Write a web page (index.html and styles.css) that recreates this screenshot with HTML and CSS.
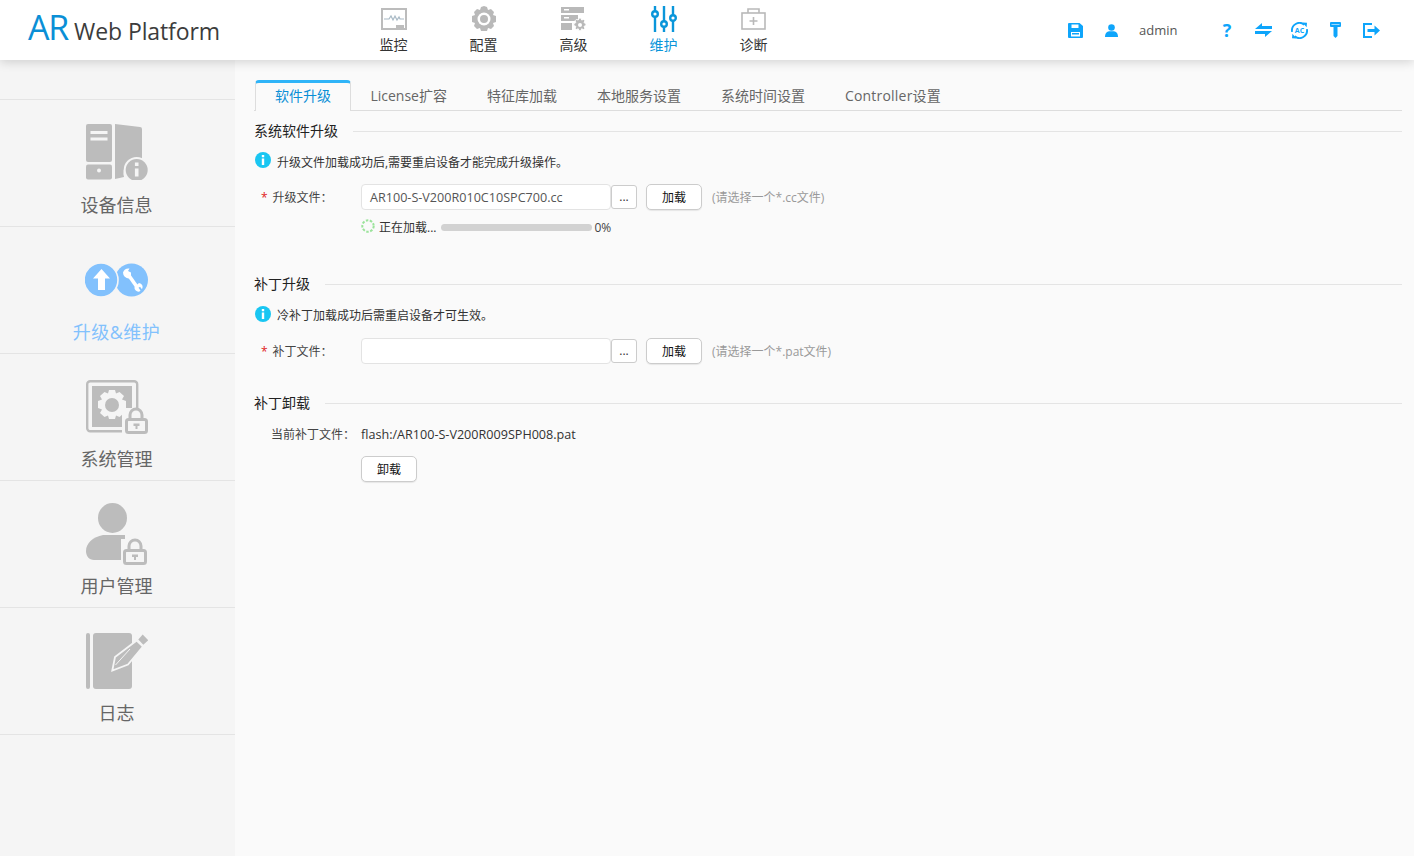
FILE: index.html
```html
<!DOCTYPE html>
<html lang="zh-CN">
<head>
<meta charset="utf-8">
<title>AR Web Platform</title>
<link rel="stylesheet" href="styles.css">
</head>
<body>
<header class="header">
  <div class="logo"><span class="logo-ar">AR</span><span class="logo-text">Web Platform</span></div>
  <nav class="topnav">
    <a class="topnav-item">
      <svg class="topnav-icon" viewBox="0 0 26 22"><rect x="1" y="1" width="24" height="20" fill="none" stroke="#bcbcbc" stroke-width="2"/><path d="M3 11h5l2-3 2 4 2-4 2 4 2-3 1 2h4" fill="none" stroke="#a9bac6" stroke-width="1.2"/><path d="M15 20v-3h8v3z" fill="#bcbcbc"/></svg>
      <span>监控</span>
    </a>
    <a class="topnav-item">
      <svg class="topnav-icon" viewBox="0 0 26 26"><path d="M13 0l3 1 1 3 3-1 3 3-1 3 3 1v6l-3 1 1 3-3 3-3-1-1 3h-6l-1-3-3 1-3-3 1-3-3-1v-6l3-1-1-3 3-3 3 1 1-3z" fill="#b9b9b9"/><circle cx="13" cy="13" r="6.500" fill="#fff"/><circle cx="13" cy="13" r="4" fill="#b9b9b9"/></svg>
      <span>配置</span>
    </a>
    <a class="topnav-item">
      <svg class="topnav-icon" viewBox="0 0 26 24"><path d="M0 0h23v6H0zM0 8h17v6H0zM0 16h11v7H0z" fill="#b9b9b9"/><path d="M3 2h5v1.500H3zM3 10h5v1.500H3z" fill="#fff"/><path d="M18 11l2 0 .6 2 2-.6 1.400 1.400-1 1.800 2 1v2l-2 .8 1 1.800-1.400 1.400-2-.8-.6 2h-2l-.8-2-1.800.8-1.400-1.400.8-1.800-2-.8v-2l2-1-.8-1.800 1.400-1.400 1.800.6z" fill="#b9b9b9" stroke="#fff"/><circle cx="19" cy="18" r="2" fill="#fff"/></svg>
      <span>高级</span>
    </a>
    <a class="topnav-item is-active">
      <svg class="topnav-icon" viewBox="0 0 26 26"><g stroke="#0a96da" stroke-width="2.400" fill="#fff"><path d="M4 0v26M13 0v26M22 0v26" fill="none"/><circle cx="4" cy="8" r="2.800"/><circle cx="13" cy="18" r="2.800"/><circle cx="22" cy="12" r="2.800"/></g></svg>
      <span>维护</span>
    </a>
    <a class="topnav-item">
      <svg class="topnav-icon" viewBox="0 0 26 22"><g fill="none" stroke="#b9b9b9" stroke-width="1.600"><rect x="1" y="5" width="23" height="16"/><path d="M7 5V1h11v4M12.500 9v8M8.500 13h8"/></g></svg>
      <span>诊断</span>
    </a>
  </nav>
  <div class="tools">
    <svg class="tool tool-save" viewBox="0 0 15 15"><path fill-rule="evenodd" d="M0 1a1 1 0 011-1h10.500L15 3v11a1 1 0 01-1 1H1a1 1 0 01-1-1zM3.500 1.500V5h7V1.500zM3 9v4.500h9V9z" fill="#0ea5fb"/><rect x="4" y="10" width="7" height="1.500" fill="#0ea5fb"/></svg>
    <svg class="tool tool-user" viewBox="0 0 13 13"><circle cx="6.500" cy="3.500" r="3.300" fill="#0ea5fb"/><path d="M0 13c0-4 2-5.500 4-5.800h5c2 .3 4 1.800 4 5.800z" fill="#0ea5fb"/></svg>
    <span class="username">admin</span>
    <span class="tool-help">?</span>
    <svg class="tool tool-swap" viewBox="0 0 17 14"><path d="M7 0v3h10v3H0zM10 14v-3H0V8h17z" fill="#0ea5fb"/></svg>
    <svg class="tool tool-ac" viewBox="0 0 17 17"><path d="M13.300 2.700A7.500 7.500 0 001.100 9.800M3.700 14.300A7.500 7.500 0 0015.900 7.200" fill="none" stroke="#0ea5fb" stroke-width="1.900"/><path d="M11.500 .5l4.500 .2-.4 4.600zM5.500 16.500l-4.500-.2.4-4.600z" fill="#0ea5fb"/><text x="8.500" y="11" text-anchor="middle" class="tool-ac-text">AC</text></svg>
    <svg class="tool tool-key" viewBox="0 0 11 16"><path d="M1 0h9a1 1 0 011 1v3a1 1 0 01-1 1H7.500v9l-2 2-2-2V5H1a1 1 0 01-1-1V1a1 1 0 011-1z" fill="#0ea5fb"/><rect x="1.500" y="2" width="8" height="1" fill="#9bd8fd"/></svg>
    <svg class="tool tool-exit" viewBox="0 0 17 15"><path d="M9 1H1v13h8" fill="none" stroke="#0ea5fb" stroke-width="2"/><path d="M4.500 6h7V2.500L17 7.500l-5.500 5V9h-7z" fill="#0ea5fb"/></svg>
  </div>
</header>

<div class="layout">
  <aside class="sidebar">
    <a class="side-item">
      <svg class="side-icon" viewBox="0 0 62 56"><rect x="0" y="0" width="26" height="38" rx="2" fill="#bcbcbc"/><rect x="0" y="40.500" width="26" height="15" rx="2" fill="#bcbcbc"/><path d="M4.500 7h17v3h-17zM4.500 13.500h17v3h-17z" fill="#f5f5f5"/><circle cx="13" cy="46.500" r="2" fill="#f5f5f5"/><path d="M29 0l25 3a2 2 0 012 2v30H52a14 14 0 00-14 18l-9 2z" fill="#bcbcbc"/><circle cx="50.700" cy="46" r="13" fill="#f5f5f5"/><circle cx="50.700" cy="46" r="11" fill="#bcbcbc"/><path d="M48.900 44.500h3.600v8h-3.600zM48.900 38.500h3.600v3.500h-3.600z" fill="#f5f5f5"/></svg>
      <span>设备信息</span>
    </a>
    <a class="side-item is-active">
      <svg class="side-icon" viewBox="0 0 64 34"><circle cx="46.500" cy="17" r="16.500" fill="#82c1fd"/><circle cx="16" cy="17" r="17" fill="#82c1fd" stroke="#f5f5f5" stroke-width="1.600"/><path d="M16.500 6l8.500 9.500h-5V27h-7V15.500H8z" fill="#fff"/><path d="M42.500 10.500L52 24" stroke="#fff" stroke-width="3.600" fill="none"/><path d="M44.500 5.500a6 6 0 00-6.500 4 6 6 0 006 6l2-2 0-4-3-1.500z" fill="#fff"/><path d="M49.500 24a4 4 0 005 4.500l1-1-2-2.800 1.500-1 2 2.500a4 4 0 00-3-6.200z" fill="#fff"/></svg>
      <span>升级&amp;维护</span>
    </a>
    <a class="side-item">
      <svg class="side-icon" viewBox="0 0 62 54"><rect x="1.200" y="1.200" width="50" height="50" rx="3" fill="none" stroke="#bcbcbc" stroke-width="2.400"/><rect x="6" y="6" width="40" height="41" fill="#bcbcbc"/><path d="M23 10h6l1 3.500 3.500-1.500 4.500 4-2 3.500 4 1.500v7l-4 1.500 2 3.500-4.500 4-3.500-1.500-1 3.500h-6l-1-3.500-3.500 1.500-4.500-4 2-3.500-4-1.500v-7l4-1.500-2-3.500 4.500-4 3.500 1.500z" fill="#f5f5f5"/><circle cx="26" cy="25" r="7" fill="#bcbcbc"/><rect x="36" y="28" width="26" height="26" fill="#f5f5f5"/><path d="M44 39v-4a6 6 0 0112 0v4" fill="none" stroke="#bcbcbc" stroke-width="3"/><rect x="40.500" y="39.500" width="20" height="13" rx="2" fill="#f5f5f5" stroke="#bcbcbc" stroke-width="3"/><path d="M47.500 43.500h6V46h-2v3h-2v-3h-2z" fill="#bcbcbc"/></svg>
      <span>系统管理</span>
    </a>
    <a class="side-item">
      <svg class="side-icon" viewBox="0 0 62 62"><ellipse cx="26.500" cy="15" rx="14.500" ry="15" fill="#bcbcbc"/><path d="M0 48c0-8 7-14 17-16h22v25H8c-5 0-8-4-8-9z" fill="#bcbcbc"/><rect x="35" y="36" width="27" height="26" fill="#f5f5f5"/><path d="M43 47v-4a6 6 0 0112 0v4" fill="none" stroke="#bcbcbc" stroke-width="3"/><rect x="38.500" y="47.500" width="21" height="13" rx="2" fill="#f5f5f5" stroke="#bcbcbc" stroke-width="3"/><path d="M46 51.500h6V54h-2v3h-2v-3h-2z" fill="#bcbcbc"/></svg>
      <span>用户管理</span>
    </a>
    <a class="side-item">
      <svg class="side-icon" viewBox="0 0 62 57"><rect x="0" y="1" width="4" height="56" rx="2" fill="#bcbcbc"/><rect x="7" y="1" width="39" height="56" rx="3" fill="#bcbcbc"/><path d="M26.300 38.500L29 25 50.700 8.500 57 14.500 42 32.500z" fill="#bcbcbc" stroke="#f5f5f5" stroke-width="1.800"/><path d="M29.500 33L44 17" stroke="#f5f5f5" stroke-width="1" fill="none"/><path d="M56.700 2.500l5.600 5.700-5 4.600-5-5.300z" fill="#bcbcbc"/></svg>
      <span>日志</span>
    </a>
  </aside>

  <main class="content">
    <div class="tabs">
      <a class="tab is-active">软件升级</a>
      <a class="tab">License扩容</a>
      <a class="tab">特征库加载</a>
      <a class="tab">本地服务设置</a>
      <a class="tab">系统时间设置</a>
      <a class="tab">Controller设置</a>
    </div>

    <section class="section section-first">
      <h2 class="section-title"><span>系统软件升级</span></h2>
      <p class="notice">
        <svg class="info-icon" viewBox="0 0 16 16"><circle cx="8" cy="8" r="8" fill="#19c6f2"/><path d="M6.800 6.500h2.400V13H6.800zM6.800 3h2.400v2.300H6.800z" fill="#fff"/></svg>
        <span>升级文件加载成功后,需要重启设备才能完成升级操作。</span>
      </p>
      <div class="form-row">
        <label class="form-label"><i class="req">*</i>升级文件：</label>
        <div class="file-input">AR100-S-V200R010C10SPC700.cc</div>
        <button class="browse">...</button>
        <button class="btn btn-load">加载</button>
        <span class="hint">(请选择一个*.cc文件)</span>
      </div>
      <div class="progress-row">
        <svg class="spinner" viewBox="0 0 14 14"><circle cx="7" cy="7" r="5.700" fill="none" stroke="#9be39b" stroke-width="2" stroke-dasharray="2.500 1.500"/></svg>
        <span class="progress-label">正在加载...</span>
        <span class="progress-track"></span>
        <span class="progress-value">0%</span>
      </div>
    </section>

    <section class="section section-patch">
      <h2 class="section-title"><span>补丁升级</span></h2>
      <p class="notice">
        <svg class="info-icon" viewBox="0 0 16 16"><circle cx="8" cy="8" r="8" fill="#19c6f2"/><path d="M6.800 6.500h2.400V13H6.800zM6.800 3h2.400v2.300H6.800z" fill="#fff"/></svg>
        <span>冷补丁加载成功后需重启设备才可生效。</span>
      </p>
      <div class="form-row">
        <label class="form-label"><i class="req">*</i>补丁文件：</label>
        <div class="file-input"></div>
        <button class="browse">...</button>
        <button class="btn btn-load">加载</button>
        <span class="hint">(请选择一个*.pat文件)</span>
      </div>
    </section>

    <section class="section section-unload">
      <h2 class="section-title"><span>补丁卸载</span></h2>
      <div class="info-row">
        <span class="info-label">当前补丁文件：</span>
        <span class="info-value">flash:/AR100-S-V200R009SPH008.pat</span>
      </div>
      <div class="action-row"><button class="btn">卸载</button></div>
    </section>
  </main>
</div>
</body>
</html>
```
FILE: styles.css
```css
* { box-sizing: border-box; }
html, body { height: 100%; }
body {
  margin: 0;
  display: flex;
  flex-direction: column;
  overflow: hidden;
  background: #fafafa;
  color: #333;
  font-family: "Open Sans", "Noto Sans CJK SC", sans-serif;
  font-size: 12px;
}

.header {
  position: relative;
  z-index: 2;
  flex: 0 0 60px;
  display: flex;
  align-items: flex-start;
  background: #fff;
  box-shadow: 0 2px 10px rgba(0, 0, 0, .16);
}
.logo { width: 349px; padding: 9px 0 0 28px; display: flex; align-items: baseline; white-space: nowrap; }
.logo-ar { font: 34px/36px "Open Sans", sans-serif; color: #0a8fd6; letter-spacing: -1.200px; }
.logo-text { margin-left: 6px; font: 23px/36px "Open Sans", sans-serif; color: #3c3c3c; letter-spacing: -.1px; }

.topnav { display: flex; }
.topnav-item { width: 90px; height: 60px; padding-top: 6px; display: flex; flex-direction: column; align-items: center; font-size: 14px; color: #333; }
.topnav-item span { line-height: 18px; position: absolute; top: 36px; margin-left: -1px; }
.topnav-item.is-active { color: #0a96da; }
.topnav-icon { width: 26px; height: 26px; }

.tools { margin-left: auto; height: 60px; padding-right: 34px; display: flex; align-items: center; }
.tool { flex: none; display: block; }
.tool-save { width: 15px; height: 15px; }
.tool-user { width: 13px; height: 13px; margin-left: 22px; }
.username { width: 40px; margin-left: 21px; font-size: 13px; color: #555; }
.tool-help { width: 12px; margin-left: 42px; font: bold 18px/18px "Open Sans", sans-serif; color: #0ea5fb; text-align: center; }
.tool-swap { width: 17px; height: 14px; margin-left: 22px; }
.tool-ac { width: 17px; height: 17px; margin-left: 19px; }
.tool-ac-text { font: bold 7px "Open Sans", sans-serif; fill: #0ea5fb; }
.tool-key { width: 11px; height: 16px; margin-left: 22px; }
.tool-exit { width: 17px; height: 15px; margin-left: 22px; }

.layout { flex: 1; min-height: 0; display: flex; }
.sidebar { flex: 0 0 235px; padding-top: 39px; background: #f5f5f5; }
.side-item { height: 127px; position: relative; display: flex; flex-direction: column; align-items: center; border-top: 1px solid #e4e4e4; font-size: 18px; color: #666; }
.side-item:last-child { border-bottom: 1px solid #e4e4e4; height: 128px; }
.side-item span { position: absolute; top: 92px; left: 0; right: 2px; text-align: center; line-height: 26px; }
.side-item.is-active { color: #82c1fd; letter-spacing: .5px; }
.side-icon { position: absolute; top: 24px; left: 86px; width: 62px; height: 56px; }
.side-item:nth-child(2) .side-icon { left: 85px; top: 36px; width: 64px; height: 34px; }
.side-item:nth-child(3) .side-icon { top: 26px; height: 54px; }
.side-item:nth-child(4) .side-icon { top: 22px; height: 62px; }
.side-item:nth-child(5) .side-icon { height: 57px; }

.content { flex: 1; min-width: 0; padding: 20px 12px 0 19px; }
.tabs { height: 31px; display: flex; align-items: flex-end; border-bottom: 1px solid #ddd; font-size: 14px; color: #666; }
.tab { height: 31px; padding: 0 20px; line-height: 34px; white-space: nowrap; }
.tab:last-child { letter-spacing: .2px; }
.tab.is-active { width: 96px; margin: 0 -.6px -1px 1px; padding: 0; text-align: center; height: 31px; border: 1px solid #ddd; border-top: 3px solid #2fb4f8; border-bottom: 0; border-radius: 4px 4px 0 0; background: #fafafa; color: #0a8fd6; line-height: 26px; }

.section-title { margin: 0; display: flex; align-items: center; gap: 15px; font-size: 14px; font-weight: 400; line-height: 20px; color: #222; }
.section-title::after { content: ""; flex: 1; height: 1px; background: #e4e4e4; }
.section-first { padding-top: 10px; }
.section-patch { padding-top: 37px; }
.section-unload { padding-top: 29px; }

.notice { margin: 11px 0 0 1px; height: 20px; display: flex; align-items: center; gap: 6px; font-size: 12px; color: #333; }
.info-icon { width: 16px; height: 16px; margin-top: -5px; flex: none; }
.section-patch .info-icon { margin-top: -3px; }

.form-row { margin-top: 12px; height: 26px; display: flex; align-items: center; }
.section-patch .form-row { margin-top: 13px; }
.form-label { width: 107px; padding-left: 7px; color: #444; white-space: nowrap; }
.req { margin-right: 5px; font-style: normal; color: #e02020; font-size: 12px; }
.file-input { width: 250px; height: 26px; padding-left: 8px; line-height: 26px; background: #fff; border: 1px solid #e3e3e3; border-radius: 4px; color: #555; font-size: 12.600px; }
.browse { width: 26px; height: 24px; margin: -1px 0 0 0; padding: 0; background: #fff; border: 1px solid #ccc; border-radius: 3px; font: 12px/20px "Open Sans", sans-serif; color: #333; }
.btn { width: 56px; height: 26px; padding: 0; background: #fff; border: 1px solid #ccc; border-radius: 5px; box-shadow: 0 1px 1px rgba(0, 0, 0, .08); font: 12px "Open Sans", "Noto Sans CJK SC", sans-serif; color: #111; }
.btn-load { margin-left: 9px; }
.hint { margin-left: 10px; color: #999; }

.progress-row { margin: 7px 0 0 107px; height: 20px; display: flex; align-items: center; }
.spinner { width: 14px; height: 14px; margin-top: -3px; }
.progress-label { margin-left: 4px; color: #333; }
.progress-track { width: 151px; height: 7px; margin-left: 5px; background: #d2d2d2; border-radius: 4px; }
.progress-value { margin-left: 2px; color: #444; }

.info-row { margin-top: 11px; height: 20px; display: flex; align-items: center; }
.info-label { width: 107px; padding-left: 17px; color: #444; white-space: nowrap; }
.info-value { color: #333; font-size: 12.600px; }
.action-row { margin: 12px 0 0 107px; }
```
